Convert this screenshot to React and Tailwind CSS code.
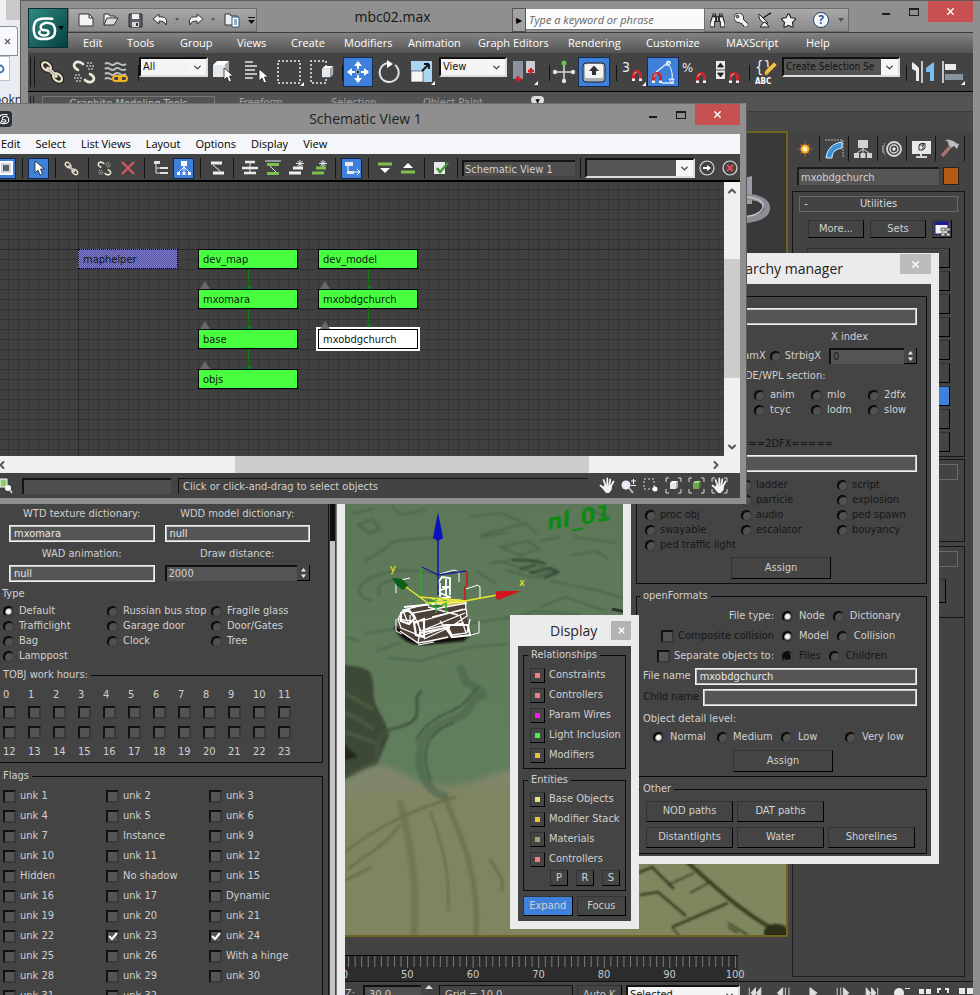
import { ChevronDown, ChevronLeft, ChevronRight, ChevronUp, X as XIcon } from "lucide-react";
import { FaBinoculars, FaKey, FaSatelliteDish, FaStar } from "react-icons/fa";

/* ---------- small shared controls ---------- */

const Radio = ({ name, label, checked, dim, gap = "gap-[6px]" }) => (
  <label className={`flex items-center whitespace-nowrap ${gap} ${dim ? "text-[#161616]" : ""}`}>
    <input
      type="radio"
      name={name}
      defaultChecked={checked}
      disabled={dim}
      className={`size-[11px] shrink-0 appearance-none rounded-full border border-[#3c3c3c] border-t-black border-l-black bg-[#505050] shadow-[inset_1px_1px_0_#0c0c0c] ${
        dim
          ? "checked:bg-[radial-gradient(circle,#0c0c0c_3px,#555_4px)]"
          : "checked:bg-[radial-gradient(circle,#f4f4f4_2px,#333_4px)]"
      }`}
    />
    <span>{label}</span>
  </label>
);

const Check = ({ label, checked, dim, hour }) => (
  <label className={`flex items-center gap-1 whitespace-nowrap ${dim ? "text-[#161616]" : ""}`}>
    <span className="relative flex">
      <input
        type="checkbox"
        defaultChecked={checked}
        disabled={dim}
        aria-label={hour}
        className="peer size-[13px] shrink-0 appearance-none border-2 border-[#3a3a3a] border-t-[#121212] border-l-[#121212] bg-[#545454]"
      />
      <svg viewBox="0 0 13 13" className="pointer-events-none absolute inset-0 hidden size-[13px] peer-checked:block">
        <path d="M3 6l3 3 5-6" fill="none" stroke="#fff" strokeWidth="2" />
      </svg>
    </span>
    {label && <span>{label}</span>}
  </label>
);

const Field = ({ value = "", label, className = "" }) => (
  <input
    type="text"
    aria-label={label}
    defaultValue={value}
    className={`h-[17px] min-w-0 border border-[#f0f0f0] bg-[#555] px-1 text-[11px] leading-[13px] text-[#e6e6e6] outline-1 -outline-offset-2 outline-[#c4c4c4] ${className}`}
  />
);

const Spinner = ({ value, label, dim }) => (
  <div className="flex h-4 w-full">
    <input
      type="text"
      aria-label={label}
      defaultValue={value}
      className={`min-w-0 flex-1 border-t-2 border-l-2 border-[#111] bg-[#555] px-[2px] leading-3 outline-none ${dim ? "text-[#161616]" : ""}`}
    />
    <button type="button" aria-label={`Step ${label}`} className="flex w-[13px] items-center justify-center border-r border-b border-black bg-[#454545]">
      <svg viewBox="0 0 7 12" className="h-3 w-[7px]" fill="#e8e8e8">
        <path d="M3.500 1L6 4.500H1zM3.500 11L6 7.500H1z" />
      </svg>
    </button>
  </div>
);

const PushButton = ({ children, className = "", tone = "bg-[#444]", label }) => (
  <button
    type="button"
    aria-label={label}
    className={`flex items-center justify-center border border-[#333] border-r-black border-b-black whitespace-nowrap ${tone} ${className}`}
  >
    {children}
  </button>
);

const Group = ({ title, className = "", legendClass = "", children }) => (
  <fieldset className={`min-w-0 border border-[#0c0c0c] ${className}`}>
    {title && <legend className={`px-[3px] leading-4 ${legendClass}`}>{title}</legend>}
    {children}
  </fieldset>
);

const DropDown = ({ label, text, className = "", textClass = "bg-[#f4f4f4] text-[11px] text-[#111]" }) => (
  <div className={`relative h-5 border-2 border-[#111] border-r-[#ddd] border-b-[#ddd] bg-white ${className}`}>
    <select aria-label={label} className={`block h-full w-full appearance-none overflow-hidden pr-[17px] pl-[2px] leading-4 whitespace-nowrap outline-none ${textClass}`}>
      <option>{text}</option>
    </select>
    <span className="pointer-events-none absolute inset-y-0 right-0 flex w-[17px] items-center justify-center bg-[#f6f6f6] text-[#444]">
      <ChevronDown size={11} strokeWidth={3} />
    </span>
  </div>
);

const Caption = ({ dark }) => (
  <div className={`flex h-[21px] items-stretch ${dark ? "text-[#1c1c1c]" : ""}`}>
    <button type="button" aria-label="Minimize" className="flex w-7 items-center justify-center">
      <span className="mt-1 h-[2px] w-2 bg-[#1c1c1c]" />
    </button>
    <button type="button" aria-label="Maximize" className="flex w-7 items-center justify-center">
      <span className="h-2 w-[10px] border border-t-2 border-[#1c1c1c]" />
    </button>
    <button type="button" aria-label="Close" className="flex w-[45px] items-center justify-center bg-[#c75050] text-white">
      <XIcon size={11} strokeWidth={3} />
    </button>
  </div>
);

/* ---------- icons ---------- */

const Ico = ({ w = 24, h = 24, children, label }) => (
  <svg width={w} height={h} viewBox={`0 0 ${w} ${h}`} fill="none" role="img" aria-label={label}>
    {children}
  </svg>
);

const MaxLogo = ({ size }) => (
  <svg width={size} height={size} viewBox="0 0 28 28" fill="none" stroke="#fff" strokeLinecap="round">
    <path d="M22 4C14 3 6 3 4 8c-1.500 4-1.500 9 0 13 1 3 4 4 9 4s9-1 11-4c1.500-4 1-8-1-11-2-2-7-2.500-10-1-3 1-4 4-2 6 2 1.500 6 0 7 2 1 3-2 5-6 4-3-.5-4-2-3-4" strokeWidth="2.600" />
  </svg>
);

const Link = ({ w = 24, bright }) => (
  <svg width={w} height={w} viewBox="0 0 24 24" fill="none" role="img" aria-label="Link">
    {!bright && (
      <g stroke="#221f1a" strokeWidth="4.500">
        <ellipse cx="6.500" cy="6.500" rx="5" ry="3.300" transform="rotate(40 6.500 6.500)" />
        <ellipse cx="17.500" cy="17.500" rx="5" ry="3.300" transform="rotate(40 17.500 17.500)" />
      </g>
    )}
    <g stroke="#e9dfca" strokeWidth="2.300">
      <ellipse cx="6.500" cy="6.500" rx="5" ry="3.300" transform="rotate(40 6.500 6.500)" />
      <ellipse cx="17.500" cy="17.500" rx="5" ry="3.300" transform="rotate(40 17.500 17.500)" />
      <path d="M8 8.500l8 7.500" strokeWidth="3.500" strokeLinecap="round" />
      <path d="M8.500 9l7 6.500" stroke="#8f8674" strokeWidth="1" />
    </g>
  </svg>
);

const Unlink = ({ w = 24 }) => (
  <svg width={w} height={w} viewBox="0 0 24 24" fill="none" role="img" aria-label="Unlink">
    <path d="M11 4C8 1 3 1 2 5c0 3 2 4 4 5M13 20c3 3 8 3 9-1 0-3-2-4-4-5" stroke="#ece6d6" strokeWidth="2.600" strokeLinecap="round" />
    <g stroke="#9a9a9a" strokeWidth="2" strokeDasharray="2 1">
      <path d="M15 3h5M14 6h8M16 9h5M3 15h5M2 18h8M4 21h5" />
    </g>
  </svg>
);

const Waves = () => (
  <Ico label="Bind to space warp">
    <path d="M1 4c4-4 6 4 10 0s6 4 11 0M1 9c4-4 6 4 10 0s6 4 11 0M1 14c4-4 6 4 10 0s6 4 11 0M1 19c3-3 5 1 7 0" stroke="#b9c0c0" strokeWidth="1.800" />
    <rect x="9" y="16" width="8" height="5" rx="2.500" stroke="#f0b323" strokeWidth="2" />
    <rect x="15" y="16" width="8" height="5" rx="2.500" stroke="#f0b323" strokeWidth="2" />
  </Ico>
);

const Pointer = ({ x = 0, y = 0 }) => (
  <path transform={`translate(${x} ${y})`} d="M0 0v12l3-3 2 5 2.500-1-2-5h4z" fill="#fff" stroke="#222" strokeWidth=".8" />
);

const Cube = ({ x = 0, y = 0, s = 1, front = "#e3e8ec", top = "#fff", side = "#a8b0b8" }) => (
  <g transform={`translate(${x} ${y}) scale(${s})`}>
    <path d="M0 4h12v12H0z" fill={front} />
    <path d="M0 4l4-4h12l-4 4z" fill={top} />
    <path d="M12 4l4-4v12l-4 4z" fill={side} />
  </g>
);

const Magnet = ({ x, y }) => (
  <g transform={`translate(${x} ${y})`}>
    <path d="M1.500 9V5a3.500 3.500 0 0 1 7 0v4" stroke="#c9262b" strokeWidth="3" />
    <path d="M1.500 11V8.500M8.500 11V8.500" stroke="#f2f2f2" strokeWidth="3" />
    <path d="M2 5a3 3 0 0 1 3-3" stroke="#f59a9a" strokeWidth="1" />
  </g>
);

const Corner = ({ x, y }) => <path d={`M${x} ${y}v-4l-4 4z`} fill="#fff" />;

/* Open hand with spread fingers */
const Hand = () => (
  <g stroke="#f2f2f2" strokeWidth="1.800" strokeLinecap="round">
    <path d="M6.500 8L4.500 3M8.300 7.500V1.500M10.300 8l1-5.500M12 9l2.500-4.500M5.500 12L1.500 8.500" />
    <path d="M5.500 8.500l7 .5-.5 4-2 2.500H7L4.500 12z" fill="#f2f2f2" strokeWidth="1" />
  </g>
);

/* Bar glyphs over the schematic toolbar */
const Bars = ({ color = "#eef1f4", plus, label }) => (
  <Ico w={18} h={16} label={label}>
    <path d={plus ? "M6 8h10M2 13h12" : "M3 3h11M5 13h11"} stroke={color} strokeWidth="3" />
    {!plus && <path d="M5 5l7 6" stroke="#eef1f4" />}
    {plus && <path d="M13 0v7M9 3.500h8M10.500 1l5 5M15.500 1l-5 5" stroke="#f5f5f5" strokeWidth=".9" />}
  </Ico>
);

/* ---------- background browser ---------- */

const BrowserBehind = () => (
  <div className="absolute inset-y-0 left-0 flex w-7 flex-col overflow-hidden bg-[#e9edf3] font-['Open_Sans',sans-serif] text-[12px] text-[#1c2a3a]">
    <div className="flex h-[26px]">
      <div className="w-[6px] bg-[#f1f1f1]" />
      <div className="h-5 flex-1 bg-[#c9c9c9]" />
    </div>
    <div className="flex h-[30px] w-[18px] items-center rounded-tr-sm border border-l-0 border-[#8a8f98] bg-[#f7f9fc] pl-[3px]">
      <XIcon size={9} strokeWidth={3} color="#555" />
    </div>
    <div className="flex h-[25px] w-[10px] items-center overflow-hidden border border-l-0 border-[#b5c3d6] bg-white">
      <svg width="6" height="10" viewBox="0 0 6 10" fill="none" stroke="#3578b8" strokeWidth="1.800">
        <circle cx="0" cy="5" r="3.500" />
      </svg>
    </div>
    <div className="-ml-[6px] h-8 leading-[38px] text-[#222]">ookn</div>
  </div>
);

/* ---------- main application window ---------- */

const QuickAccess = () => (
  <div className="mt-2 flex h-6 w-[189px] items-center gap-[9px] border border-[#6d6d6d] bg-linear-to-b from-[#a9a9a9] to-[#8a8a8a] pl-[9px]">
    <Ico w={16} h={16} label="New">
      <path d="M1 2h10l4 4v8H1z" fill="#f5f5f5" stroke="#333" />
      <path d="M11 2v4h4" stroke="#333" />
    </Ico>
    <Ico w={16} h={16} label="Open">
      <path d="M1 13V2h5l1 2h5v2" fill="#eee" stroke="#333" />
      <path d="M1 13L4 6h11l-4 7z" fill="#ddd" stroke="#333" />
    </Ico>
    <Ico w={15} h={15} label="Save">
      <path d="M1 1h13v13H1z" fill="#5d6166" stroke="#2b2b2b" />
      <path d="M4 1h7v5H4z" fill="#f1f1f1" />
      <path d="M4 9h7v5H4z" fill="#d5d5d5" />
      <path d="M8 10h2v3H8z" fill="#333" />
    </Ico>
    <Ico w={27} h={16} label="Undo">
      <path d="M1 7l6-5v3c6-1 9 2 7 8-1-3-3-4-7-4v3z" fill="#f4f4f4" stroke="#333" />
      <path d="M23 6h4l-2 3z" fill="#555" />
    </Ico>
    <Ico w={27} h={16} label="Redo">
      <path d="M15 7L9 2v3C3 4 0 7 2 13c1-3 3-4 7-4v3z" fill="#f4f4f4" stroke="#333" />
      <path d="M23 6h4l-2 3z" fill="#555" />
    </Ico>
    <Ico w={31} h={17} label="Project folder">
      <path d="M1 2h5l1 2h6v9H1z" fill="#eee" stroke="#333" />
      <path d="M8 5h7v10H8z" fill="#fff" stroke="#335f8c" />
      <path d="M10 8h3M10 10h3M10 12h3" stroke="#335f8c" />
      <path d="M24 5h7v1h-7zM24 8h7l-3.500 4z" fill="#111" />
    </Ico>
  </div>
);

const InfoCenter = () => (
  <div className="mt-2 flex h-6 w-[337px]">
    <button type="button" aria-label="Expand search" className="flex w-[14px] items-center justify-center border border-[#555] bg-[#a2a2a2] text-[8px] text-black">
      ▶
    </button>
    <input
      type="search"
      aria-label="Search"
      placeholder="Type a keyword or phrase"
      className="mt-px h-[21px] min-w-0 flex-1 border-b border-[#777] bg-[#fafafa] px-[3px] text-[11px] italic outline-none placeholder:text-[#666]"
    />
    <div className="flex w-[145px] items-center gap-[9px] border border-[#6d6d6d] bg-linear-to-b from-[#a9a9a9] to-[#8a8a8a] pl-[5px] text-[#f2f2f2]">
      <FaBinoculars size={15} stroke="#222" strokeWidth={36} />
      <FaKey size={14} stroke="#222" strokeWidth={36} className="-scale-x-100" />
      <Ico w={15} h={16} label="Communication center">
        <path d="M2 2c-1 6 4 10 9 9z" fill="#f2f2f2" stroke="#222" />
        <path d="M6 6l6-4M12 2l2-1" stroke="#222" strokeWidth="1.500" />
        <path d="M7 10l-4 5h9l-3-4z" fill="#f2f2f2" stroke="#222" />
      </Ico>
      <FaStar size={15} stroke="#222" strokeWidth={44} />
      <span className="ml-2 flex size-4 items-center justify-center rounded-full border border-[#24425f] bg-[#f4f7fa] text-[12px] font-bold text-[#1d5b95]">?</span>
      <span className="border-x-3 border-t-4 border-x-transparent border-t-[#555]" />
    </div>
  </div>
);

const MENUS = ["Edit", "Tools", "Group", "Views", "Create", "Modifiers", "Animation", "Graph Editors", "Rendering", "Customize", "MAXScript", "Help"];

const Sep = () => <span className="mt-2 h-4 w-[7px] shrink-0 border-r border-[#111]" />;

const Slot = ({ w, on, children }) => (
  <button type="button" className={`flex h-[30px] shrink-0 items-center justify-center ${w} ${on ? "border border-[#142c50] bg-[#3f81da]" : ""}`}>
    {children}
  </button>
);

const MainToolbar = () => (
  <div className="flex h-[39px] items-start border-b border-black bg-[#434343] pt-1">
    <span className="mr-px ml-[2px] h-[30px] w-[5px] shrink-0 border-x border-[#151515]" />
    <Slot w="w-8"><Link /></Slot>
    <Slot w="w-8"><Unlink /></Slot>
    <Slot w="w-8"><Waves /></Slot>
    <Sep />
    <DropDown label="Selection filter" text="All" className="w-[69px] shrink-0" />
    <Slot w="w-8">
      <Ico label="Select object"><Cube x={1} y={1} /><Pointer x={12} y={8} /></Ico>
    </Slot>
    <Slot w="w-8">
      <Ico label="Select by name">
        <path d="M1 2h8M1 6h12M1 10h10M1 14h12M1 18h8" stroke="#e8e8e8" strokeWidth="1.500" />
        <Pointer x={15} y={9} />
      </Ico>
    </Slot>
    <Slot w="w-9">
      <Ico w={28} h={28} label="Rectangular region">
        <rect x="2" y="3" width="22" height="22" stroke="#f0f0f0" strokeWidth="1.500" strokeDasharray="2 2" />
        <Corner x={28} y={28} />
      </Ico>
    </Slot>
    <Slot w="w-7">
      <Ico w={24} h={24} label="Window crossing">
        <path d="M16 7V1H1v22h15v-5" stroke="#f0f0f0" strokeWidth="1.500" strokeDasharray="2 2" />
        <Cube x={12} y={6} s={0.7} />
      </Ico>
    </Slot>
    <Sep />
    <Slot w="w-[30px]" on>
      <Ico label="Move">
        <path d="M12 1l4 5h-3v3h-2V6H8zM12 23l4-5h-3v-3h-2v3H8zM1 12l5-4v3h3v2H6v3zM23 12l-5-4v3h-3v2h3v3z" fill="#fff" />
        <path d="M10.500 10.500h3v3h-3z" fill="#1a1a1a" stroke="#fff" strokeWidth=".5" />
      </Ico>
    </Slot>
    <Slot w="w-8">
      <Ico label="Rotate">
        <path d="M12 3a9.500 9.500 0 1 0 6 2" stroke="#dfe3e6" strokeWidth="2" />
        <path d="M10 0l6 4-6 4z" fill="#fff" />
      </Ico>
    </Slot>
    <Slot w="w-[34px]">
      <Ico w={26} h={26} label="Scale">
        <path d="M2 2h21v21H2z" fill="#a9d5f0" />
        <path d="M2 12h12v11H2z" fill="#f5f5f5" stroke="#333" strokeWidth=".6" />
        <path d="M13 12l7-7M20 5h-5M20 5v5" stroke="#111" strokeWidth="1.800" />
        <Corner x={26} y={26} />
      </Ico>
    </Slot>
    <DropDown label="Reference coordinate system" text="View" className="w-[68px] shrink-0" />
    <Slot w="w-9">
      <Ico w={26} h={26} label="Use pivot point">
        <path d="M1 2h10v18H1z" fill="#8b949c" />
        <path d="M14 2h9v12h-9z" fill="#c9ced2" />
        <path d="M3 20h6M6 17v6M16 12h6M19 9v6" stroke="#d51f26" strokeWidth="2.400" />
        <Corner x={26} y={26} />
      </Ico>
    </Slot>
    <Sep />
    <Slot w="w-7">
      <Ico w={24} h={24} label="Manipulate">
        <path d="M12 3v18M3 12h18" stroke="#d8d8d8" strokeWidth="1.500" />
        <circle cx="12" cy="3" r="2.500" fill="#69c253" />
        <circle cx="12" cy="21" r="2.200" fill="#e2e2e2" />
        <circle cx="3" cy="12" r="2.200" fill="#e2e2e2" />
        <circle cx="21" cy="12" r="2.200" fill="#e2e2e2" />
      </Ico>
    </Slot>
    <Slot w="w-8" on>
      <Ico label="Keyboard shortcut override">
        <rect x="1" y="3" width="22" height="19" rx="3" fill="#aab2b9" stroke="#222" />
        <rect x="3" y="4" width="18" height="14" rx="2" fill="#f3f3f3" />
        <path d="M12 5.500l5 5.500h-3v4h-4v-4H7z" fill="#333" />
      </Ico>
    </Slot>
    <Sep />
    <Slot w="w-[30px]">
      <Ico w={28} h={28} label="Snaps toggle">
        <text x="4" y="14" fontSize="14" fill="#eee">3</text>
        <Magnet x={14} y={12} />
        <Corner x={28} y={28} />
      </Ico>
    </Slot>
    <Slot w="w-8" on>
      <Ico w={26} h={26} label="Angle snap">
        <path d="M5 14L20 2M12 24h12" stroke="#dfeaf8" strokeWidth="1.500" />
        <path d="M17 4c4 4 6 10 5 17M22 24l-3-4h5zM17 2v5l4-3z" stroke="#fff" />
        <Magnet x={2} y={13} />
      </Ico>
    </Slot>
    <Slot w="w-8">
      <Ico w={26} h={26} label="Percent snap">
        <text x="0" y="13" fontSize="13" fill="#eee">%</text>
        <Magnet x={14} y={13} />
      </Ico>
    </Slot>
    <Slot w="w-8">
      <Ico w={26} h={26} label="Spinner snap">
        <path d="M2 2h9v18H2z" fill="#e9eaeb" />
        <path d="M6.500 4l3 4h-6zM6.500 18l3-4h-6zM2 11h9" fill="#222" stroke="#222" strokeWidth=".8" />
        <Magnet x={15} y={13} />
      </Ico>
    </Slot>
    <Sep />
    <Slot w="w-8">
      <Ico w={26} h={26} label="Edit named selection sets">
        <text x="2" y="13" fontSize="15" fill="#eee">{"{}"}</text>
        <path d="M12 12l9-9 3 3-9 9-4 1z" fill="#f0c14b" stroke="#6b4c13" strokeWidth=".7" />
        <text x="2" y="25" fontSize="8" fontWeight="bold" fill="#fff">ABC</text>
      </Ico>
    </Slot>
    <DropDown label="Named selection sets" text="Create Selection Se" className="w-[118px] shrink-0" textClass="bg-[#555] text-[10px] text-[#111]" />
    <Sep />
    <Slot w="w-8">
      <Ico w={26} h={26} label="Mirror">
        <path d="M2 3l3 2 4 4v13H6V12l-4-2z" fill="#e9ecef" />
        <path d="M12 2v22" stroke="#eee" strokeWidth="1.500" />
        <path d="M24 3l-3 2-5 4v4h4v9h4z" fill="#79bdf0" />
      </Ico>
    </Slot>
    <Slot w="w-7">
      <Ico w={24} h={26} label="Align">
        <path d="M2 2v22" stroke="#eee" strokeWidth="1.500" />
        <path d="M4 5h11v6H4z" fill="#e9ecef" />
        <path d="M4 15h18v6H4z" fill="#8895a0" />
        <Corner x={24} y={26} />
      </Ico>
    </Slot>
  </div>
);

const Ribbon = () => (
  <div className="bg-[#484848]">
    <div className="flex h-5 items-start border-b border-[#3a3a3a] bg-[#535353] pt-1 text-[11px] text-[#a0a0a0]">
      <span className="mr-2 ml-[2px] h-3 w-[4px] border-x border-[#222]" />
      <a href="#graphite" className="w-[173px] border border-b-0 border-[#777] text-center leading-[14px] text-[#b8b8b8]">Graphite Modeling Tools</a>
      <a href="#freeform" className="ml-6 w-[92px] leading-[14px]">Freeform</a>
      <a href="#selection" className="w-[92px] leading-[14px]">Selection</a>
      <a href="#paint" className="w-[108px] leading-[14px]">Object Paint</a>
      <span className="flex h-2 w-[13px] items-center justify-center rounded-sm bg-[#ddd] text-[6px] text-black">▼</span>
    </div>
    <div className="h-[19px]" />
  </div>
);

const Scene = () => (
  <svg className="absolute inset-0 h-full w-full" role="img" aria-label="Perspective viewport">
    <defs>
      <linearGradient id="grass" x1="0" y1="0" x2="0" y2="1">
        <stop offset="0" stopColor="#5c7658" />
        <stop offset="1" stopColor="#64835f" />
      </linearGradient>
      <filter id="soft"><feGaussianBlur stdDeviation="1.200" /></filter>
      <filter id="softer"><feGaussianBlur stdDeviation="3" /></filter>
    </defs>
    {/* origin shifted so that the numbers below are desktop coordinates */}
    <g transform="translate(-28 -132)">
      <path d="M28 132h762v330H28z" fill="#393939" />
      {/* view cube */}
      <path d="M740 178l12-3v28h-12z" fill="#9a9ea6" />
      <path d="M744 196c14-1 24 5 23 12s-12 11-25 11" fill="none" stroke="#8b8e95" strokeWidth="6" />
      <path d="M744 196c12-1 20 5 19 10s-8 9-21 10" fill="none" stroke="#c0c2c7" strokeWidth="1.500" />
      <path d="M340 460h450v480H340z" fill="url(#grass)" />
      {/* dark scrub and sand */}
      <path d="M340 664c12 0 24 2 30 7 5 8 2 20 5 30 4 12 12 20 14 34l-12 28-40 20z" fill="#3d4a35" filter="url(#soft)" />
      <path d="M340 690c12 4 22 14 34 18M340 710c14 4 24 12 34 18M340 730c12 2 24 8 36 12" stroke="#4b5840" strokeWidth="4" fill="none" filter="url(#soft)" />
      <path d="M340 740l18 16-18 4z" fill="#20261a" filter="url(#soft)" />
      <path d="M336 784c14-6 28-18 44-20 20 4 30 16 52 20 30 6 50-8 72-14 34-4 56-20 140-26v206H336z" fill="#80866a" filter="url(#softer)" />
      <path d="M336 800c60-14 110-8 300-20v160H336z" fill="#7f855f" filter="url(#softer)" />
      <path d="M626 850h170v90H626z" fill="#80875f" />
      {/* streets drawn on the grass map */}
      <g fill="none" stroke="#3d5440" strokeWidth="1.600" opacity=".65" filter="url(#soft)" strokeLinecap="round">
        <path d="M358 524l14-6 8 10-10 4zM352 512l22-4M392 506l10 8 24-6M366 560l30-20 40-4M470 516l30-4 20 8M480 536l26-4M500 546l28-6 12 8-20 6zM482 534l44-12 10 10M540 540l20-4M572 554l24-4 12 8M575 536l40 6M590 508l20 10" />
        <path d="M372 600c-14-4-18-12-4-22 20-10 40-10 66-6M380 594c-6-8 4-14 18-16M490 562l34-5 16 8 16 8-22 4-28-8M500 560l40 14 14-4M476 570l20 12" />
        <path d="M388 657l32 3 50-14 36-3M360 640l-14-4M456 624l60-8 20-6 44 4M540 606l26-10 40 14M600 590l26 8M550 580l50 10" />
        <path d="M366 632l30-4M376 650l24-8" />
      </g>
      <path d="M512 559l24 1 10 3M520 568l16-4M530 572l20-5 8 4-14 6" stroke="#2f4432" strokeWidth="2" fill="none" filter="url(#soft)" />
      <path d="M612 608l18 4" stroke="#27382a" strokeWidth="3" fill="none" />
      {/* dry streams */}
      <g fill="none" filter="url(#soft)">
        <path d="M459 664c4 6 3 12 8 18 8 4 16 6 16 12-16 4-8 18-30 24-14 6-26 12-31 24-5 16-2 30 6 42 6 8 12 10 20 12" stroke="#48634d" strokeWidth="8" opacity=".55" />
        <path d="M478 686c-8 8-10 16-26 24-16 6-30 16-36 30" stroke="#384f3c" strokeWidth="1.500" />
        <path d="M422 690c-10 6-2 18-6 26-6 10-20 10-30 14" stroke="#3b523e" strokeWidth="2.500" />
        <path d="M386 730c-14 10-4 24-14 34" stroke="#42573f" strokeWidth="6" opacity=".6" />
        <path d="M454 722c-14 4-24 14-27 24s0 24 4 34" stroke="#3a523e" strokeWidth="1.500" />
      </g>
      {/* vehicle tracks in the sand */}
      <g fill="none" stroke="#5f6446" filter="url(#soft)" opacity=".7">
        <path d="M400 800c10 40 18 80 14 136" strokeWidth="7" opacity=".6" />
        <path d="M446 800c18 40 34 80 30 136" strokeWidth="5" opacity=".7" />
        <path d="M430 810c14 40 20 60 18 100" strokeWidth="2" />
        <path d="M346 850c30-22 60-40 110-54M348 868c20-16 36-22 52-44M344 880l28-14M490 858l12 20v12" strokeWidth="2.500" />
      </g>
      {/* town blocks at the lower right */}
      <g fill="none" stroke="#3a3d22" filter="url(#soft)">
        <path d="M686 860c30 26 50 48 100 76" strokeWidth="4" />
        <path d="M638 872l14-6 22 22M640 894l18-3 28 24M672 926l56-24" strokeWidth="2.500" />
        <path d="M690 892l22-12M668 884l26-12M728 922l20 12M728 926l10 6M672 926l8 10" strokeWidth="1.500" />
      </g>
      <path d="M764 930c2-8 18-10 24-2v10h-24z" fill="#2c2f18" filter="url(#soft)" />
      <text x="548" y="529" fontSize="22" fontStyle="italic" fontWeight="bold" fontFamily="DejaVu Sans" fill="#0d8a12" transform="rotate(-9 548 529)">nl_01</text>
      {/* vehicle */}
      <path d="M394 626c6 12 14 18 30 18l40-4 8-8-20-12z" fill="#0a0f0a" filter="url(#soft)" />
      <path d="M398 618l5-9 14-4 20-4 28 1 3 20 3 7-20 8-31 6-15-10-7-6z" fill="#4d4039" />
      <g fill="none" stroke="#fff" strokeWidth="1.300">
        <path d="M398 618l5-9 24-6 38-3 2 15-12 8-34 12-20-8zM400 630l18 12 12-2 18-4M403 609l10 3 54-10M413 612l8 18M421 620l42-12M421 630l44-18M398 618l20 3 3 14M448 626l4 8 15-2 3-14M452 624l12-2M440 620l12 16M418 642l2-12 26-6M404 612l4 10M410 614v8M428 606l30 8M432 616l34-8M424 638l22-10M460 614l6 18" />
        <path d="M401 612l8-3 6 8-6 6-8-3zM414 622l10-4v18l-8-2zM446 624l6 12 18-2-2-10zM404 606l62-6M420 632l30-6" strokeWidth="2.200" />
        <path d="M438 582l4-6 8 1v17M440 596v-14M446 578v16M442 586h8M438 590l12-4M437 598l14-2M440 592l10 4" strokeWidth="1.800" />
        <path d="M440 573l14-4 5 2v10M466 588l12-4 2 2v11M396 592v-12l14-3M396 618v12l6 3M418 644l16-3M479 620v12l-13 3M396 580l6 4" strokeWidth="1" />
      </g>
      <path d="M430 597l30 1 5 4-22 4z" fill="#f4ee7a" opacity=".75" />
      {/* transform gizmo */}
      <path d="M438 574v-36" stroke="#0b17b5" strokeWidth="1.500" />
      <path d="M438 511l-5 26 5 3 5-3z" fill="#0b10c0" />
      <path d="M422 566l16 8 28-4M438 574v20" stroke="#10209c" strokeWidth="1.300" fill="none" />
      <path d="M467 570v14l-2 2v14" stroke="#d01515" strokeWidth="1.500" fill="none" />
      <path d="M421 567v30M428 602l12-5 8 4-12 6zM436 600v12M446 600v12" stroke="#1faf2a" strokeWidth="1.300" fill="none" />
      <path d="M406 586l22 16 37-2 32-6M420 596l46 4" stroke="#e9e92a" strokeWidth="1.300" fill="none" />
      <path d="M392 577l10 1 6 6-5 5-6-4z" fill="#0b5f16" />
      <path d="M521 590l-24 0c-2 3-2 6 1 9z" fill="#d4141a" />
      <text x="390" y="571" fontSize="11" fill="#f2f20a">y</text>
      <text x="519" y="585" fontSize="11" fill="#f2f20a">x</text>
    </g>
  </svg>
);

const PanelTab = ({ children }) => (
  <button type="button" className="flex h-[25px] w-[29px] shrink-0 items-center justify-center border-r border-r-[#151515]">{children}</button>
);

const PanelTabs = () => (
  <div className="flex h-[27px] items-center pl-[3px]">
    <PanelTab>
      <Ico w={20} h={20} label="Create">
        <path d="M10 2v16M2 10h16M5 5l10 10M15 5L5 15" stroke="#b5611f" strokeWidth="1" />
        <circle cx="10" cy="10" r="4.500" fill="#f7a325" />
        <circle cx="10" cy="10" r="2.500" fill="#fff6b8" />
      </Ico>
    </PanelTab>
    <PanelTab>
      <Ico w={20} h={20} label="Modify">
        <path d="M1 1h18v18" stroke="#bbb" strokeDasharray="2 1" />
        <path d="M2 19C3 10 9 4 18 3v6C12 10 8 13 8 19z" fill="#3d93d6" stroke="#d9efff" />
      </Ico>
    </PanelTab>
    <PanelTab>
      <Ico w={20} h={20} label="Hierarchy">
        <path d="M5 1h10v8H5zM1 14h5v5H1zM7.500 14h5v5h-5zM14 14h5v5h-5z" fill="#cfd3d6" />
        <path d="M10 9v5M10 10l-6 4M10 10l6 4" stroke="#cfd3d6" />
      </Ico>
    </PanelTab>
    <PanelTab>
      <Ico w={20} h={20} label="Motion">
        <circle cx="12" cy="10" r="7" stroke="#d6d9dc" strokeWidth="1.800" />
        <circle cx="12" cy="10" r="4" stroke="#d6d9dc" strokeWidth="1.500" />
        <circle cx="12" cy="10" r="1.700" fill="#eee" />
        <path d="M3 4c-2 4-2 8 0 12M1 6c-1 3-1 5 0 8" stroke="#999" />
      </Ico>
    </PanelTab>
    <PanelTab>
      <Ico w={21} h={20} label="Display">
        <path d="M1 2h19v13H1z" fill="#e6e8ea" />
        <path d="M8 6l2-1.500h4V9l-2 2H8zM8 6h4v5M12 6l2-1.500" stroke="#333" />
        <path d="M5 18h11M10 15v3" stroke="#cfd3d6" strokeWidth="2" />
      </Ico>
    </PanelTab>
    <PanelTab>
      <Ico w={20} h={20} label="Utilities">
        <path d="M10 8L2 17" stroke="#a4746c" strokeWidth="3.500" />
        <path d="M5 1c5-1 9 1 11 3l3 1-2 5-3-3-3 2-3-4c1-1 0-3-3-4z" fill="#b7bcc1" />
      </Ico>
    </PanelTab>
  </div>
);

const Rollout = ({ title, children, className = "" }) => (
  <section className={`mx-1 border border-[#151515] px-[6px] pb-1 ${className}`}>
    <h2 className="mt-1 flex h-4 items-center border border-[#6a6a6a] text-[#dcdcdc]">
      <span className="w-3 text-center">{title ? "-" : ""}</span>
      <span className="flex-1 pr-3 text-center">{title}</span>
    </h2>
    {children}
  </section>
);

const CommandPanel = () => (
  <aside className="flex w-[181px] shrink-0 flex-col pt-1">
    <PanelTabs />
    <div className="mr-[10px] ml-[9px] mt-[5px] flex items-center gap-1">
      <input
        aria-label="Object name"
        defaultValue="mxobdgchurch"
        className="h-[18px] min-w-0 flex-1 border-t-2 border-l-2 border-[#1b1b1b] bg-[#555] px-[2px] outline-none"
      />
      <button type="button" aria-label="Object color" className="h-[18px] w-4 border border-[#222] bg-[#b35b15]" />
    </div>
    <Rollout title="Utilities" className="mt-[6px]">
      <div className="mt-2 flex gap-[6px] pl-[9px]">
        <PushButton className="h-[18px] w-14">More...</PushButton>
        <PushButton className="h-[18px] w-14">Sets</PushButton>
        <PushButton className="h-[18px] w-5" label="Configure button sets">
          <Ico w={17} h={16}>
            <path d="M1 1h13v12H1z" fill="#f2f2f2" stroke="#1a1a9a" />
            <path d="M1 1h13v3H1z" fill="#1a1a9a" />
            <path d="M7 7h4v3H7zM12 7h4v3h-4zM7 12h4v3H7zM12 12h4v3h-4z" fill="#ccc" stroke="#333" strokeWidth=".6" />
          </Ico>
        </PushButton>
      </div>
      <div className="mt-[10px] flex flex-col gap-[3px] px-2">
        {["Asset Browser", "Camera Match", "Collapse", "Color Clipboard", "Measure", "Motion Capture", "MAXScript", "Reset XForm", "Flight Studio"].map((name) => (
          <PushButton key={name} label={name} className="h-5" tone={name === "MAXScript" ? "bg-[#3f81da]" : "bg-[#444]"} />
        ))}
      </div>
    </Rollout>
    <Rollout className="mt-[2px] h-[83px]" />
    <Rollout className="mt-1 flex h-[72px] flex-col">
      <PushButton label="Close utility" className="mx-3 mt-3 h-6" />
    </Rollout>
    <div className="mx-1 mb-1 flex-1 border border-t-0 border-[#1d1d1d]" />
  </aside>
);

const Timeline = () => (
  <div className="h-11 bg-[#434343] pt-[18px]">
    <div className="mr-[50px] h-[26px] border-t border-black bg-[#2c2c2c] pl-[281px]">
      <div className="relative w-[459px]">
        <svg viewBox="0 0 459 12" className="block h-3 w-full" stroke="#7b7b7b">
          {Array.from({ length: 61 }, (_, i) => (
            <path key={i} d={`M${33 + i * 6.557} 0v${i % 10 === 0 ? 12 : 11}`} />
          ))}
        </svg>
        <div className="grid grid-cols-7 text-center leading-[14px] text-[#c8c8c8]">
          {[40, 50, 60, 70, 80, 90, 100].map((n) => (
            <span key={n}>{n}</span>
          ))}
        </div>
      </div>
    </div>
  </div>
);

const StatusBar = () => (
  <div className="flex h-[14px] items-start overflow-hidden border-t border-[#111] bg-[#434343] pt-[3px] text-[#c8c8c8]">
    <label htmlFor="axis-z" className="w-[335px] shrink-0 pr-2 text-right leading-[18px]">Z:</label>
    <input id="axis-z" defaultValue="30.0" className="h-[18px] w-[58px] border-t-2 border-l-2 border-[#111] bg-[#505050] px-1 leading-[18px]" />
    <span className="mr-[6px] ml-1 border-x-4 border-b-4 border-x-transparent border-b-[#ddd]" />
    <span className="h-5 w-[97px] border-t border-l border-[#111] pl-[5px] leading-[18px]">Grid = 10.0</span>
    <span className="h-5 w-[44px] border-t border-r border-[#111]" />
    <PushButton className="mx-1 h-5 w-12">Auto K</PushButton>
    <DropDown label="Key filter" text="Selected" className="w-[114px] shrink-0" />
    <div className="ml-2 flex h-4 items-center gap-[14px] text-white">
      {["M1 3v12M14 3l-5 6 5 6zM8 3L3 9l5 6z", "M6 3L0 9l6 6zM9 3v12M13 3v12", "M4 3l8 6-8 6z", "M2 3v12M6 3v12M9 3l6 6-6 6z", "M2 3l5 6-5 6zM8 3l5 6-5 6zM15 3v12"].map((d) => (
        <svg key={d} width="15" height="16" viewBox="0 0 16 18" fill="#ddd" stroke="#ddd"><path d={d} /></svg>
      ))}
      <svg width="80" height="16" viewBox="0 0 80 16" fill="#e8e8e8">
        <circle cx="6" cy="8" r="5" />
        <path d="M12 3h5v1h-5zM26 4h5v5h-5zM33 4h5v5h-5zM44 3h4v2h-2v3h-2zM56 3v5h-2V5h-2V3zM66 3h6v6h-6zM74 3h6v6h-6z" />
      </svg>
    </div>
  </div>
);

const MainWindow = () => (
  <div className="absolute inset-y-0 right-0 left-5 flex flex-col border-t border-l border-[#5c5c5c] bg-[#8f8f8f] pr-[7px] pl-[7px]">
    <header className="relative flex h-[31px] shrink-0 font-['Open_Sans',sans-serif]">
      <button type="button" aria-label="Application menu" className="absolute top-[7px] left-0 z-10 flex h-10 w-10 items-center border border-[#0c2f2e] bg-linear-to-br from-[#2f8a83] to-[#06413f] pl-[2px]">
        <MaxLogo size={27} />
        <span className="border-x-3 border-t-4 border-x-transparent border-t-black" />
      </button>
      <div className="-mt-px ml-10"><QuickAccess /></div>
      <h1 className="flex-1 pl-4 text-center text-[14px] leading-[31px] text-[#151515]">mbc02.max</h1>
      <div className="-mt-px"><InfoCenter /></div>
      <div className="ml-[23px]"><Caption /></div>
    </header>
    <nav className="grid h-[21px] shrink-0 grid-cols-[44px_53px_57px_54px_53px_64px_70px_90px_78px_80px_80px_auto] border-t border-[#3c3c3c] bg-linear-to-b from-[#838383] to-[#555] pl-[55px] font-['Open_Sans',sans-serif] text-[11px] text-white">
      {MENUS.map((m) => (
        <button key={m} type="button" className="text-left leading-5 whitespace-nowrap">{m}</button>
      ))}
    </nav>
    <MainToolbar />
    <Ribbon />
    <div className="flex min-h-0 flex-1 bg-[#434343]">
      <div className="flex min-w-0 flex-1 flex-col">
        <div className="relative min-h-0 flex-1 overflow-hidden border-2 border-l-0 border-[#6e651f]">
          <Scene />
        </div>
        <Timeline />
      </div>
      <CommandPanel />
      <div className="w-1 bg-[#434343]" />
    </div>
    <StatusBar />
  </div>
);

/* ---------- map object dialog (lower left) ---------- */

const TYPES = [
  ["Default", "Russian bus stop", "Fragile glass"],
  ["Trafficlight", "Garage door", "Door/Gates"],
  ["Bag", "Clock", "Tree"],
  ["Lamppost"],
];

const FLAGS = [
  "unk 1", "unk 2", "unk 3", "unk 4", "unk 5", "unk 6", "unk 7", "Instance", "unk 9", "unk 10", "unk 11",
  "unk 12", "Hidden", "No shadow", "unk 15", "unk 16", "unk 17", "Dynamic", "unk 19", "unk 20", "unk 21",
  "unk 22", "unk 23", "unk 24", "unk 25", "unk 26", "With a hinge", "unk 28", "unk 29", "unk 30", "unk 31", "unk 32",
];

const HOURS = Array.from({ length: 24 }, (_, i) => i);

const HourNumbers = ({ from, h }) => (
  <div className={`grid grid-cols-[repeat(12,25px)] items-center pl-[3px] ${h}`}>
    {HOURS.slice(from, from + 12).map((n) => <span key={n}>{n}</span>)}
  </div>
);

const HourChecks = ({ from }) => (
  <div className="grid h-5 grid-cols-[repeat(12,25px)] items-center pl-[3px]">
    {HOURS.slice(from, from + 12).map((n) => <Check key={n} hour={`Hour ${n}`} />)}
  </div>
);

const MapDialog = () => (
  <section className="absolute top-[503px] bottom-0 left-0 flex w-[345px] overflow-hidden bg-[#ebebeb]">
    <div className="w-[329px] border-r border-[#151515] bg-[#444] pr-[5px]">
      <div className="grid grid-cols-2 gap-x-[10px] pr-[13px] pl-[9px]">
        <span className="h-[22px] text-center leading-[22px]">WTD texture dictionary:</span>
        <span className="h-[22px] text-center leading-[22px]">WDD model dictionary:</span>
        <Field label="WTD texture dictionary" value="mxomara" />
        <Field label="WDD model dictionary" value="null" />
        <span className="h-[23px] text-center leading-[23px]">WAD animation:</span>
        <span className="h-[23px] text-center leading-[23px]">Draw distance:</span>
        <Field label="WAD animation" value="null" />
        <Spinner label="Draw distance" value="2000" />
      </div>
      <p className="h-[21px] pl-[2px] leading-6">Type</p>
      <div className="flex flex-col">
        {TYPES.map((row) => (
          <div key={row[0]} className="grid h-[15px] grid-cols-[104px_104px_auto] items-center pl-[3px]">
            {row.map((t) => <Radio key={t} name="type" label={t} checked={t === "Default"} gap="gap-[5px]" />)}
          </div>
        ))}
      </div>
      <Group title="TOBJ work hours:" className="mt-1 border-l-0">
        <HourNumbers from={0} h="h-[19px] pt-1" />
        <HourChecks from={0} />
        <HourChecks from={12} />
        <HourNumbers from={12} h="h-5" />
      </Group>
      <Group title="Flags" className="mt-[5px] border-l-0 pt-[2px]">
        <div className="grid grid-cols-[103px_103px_auto] pl-[3px]">
          {FLAGS.map((f) => (
            <div key={f} className="flex h-5 items-center">
              <Check label={f} checked={f === "unk 23" || f === "unk 24"} />
            </div>
          ))}
        </div>
      </Group>
    </div>
    <div className="flex w-2 flex-col border-r border-[#777] bg-[#444]">
      <div className="mx-px h-[38px] bg-[#0d0d0d]" />
      <div className="mx-px flex-1 bg-[#c4c4c4]" />
    </div>
  </section>
);

/* ---------- hierarchy manager ---------- */

const SECTIONS = ["anim", "mlo", "2dfx", "tcyc", "lodm", "slow"];

const EFFECTS = [
  ["proc obj", "swayable", "ped traffic light"],
  ["ladder", "particle", "audio", "escalator", ""],
  ["script", "explosion", "ped spawn", "bouyancy", ""],
];

const HierarchyManager = () => (
  <section className="absolute top-[253px] left-[623px] w-[316px] border-8 border-t-0 border-[#ebebeb] bg-[#444]">
    <header className="flex h-[31px] items-start justify-end bg-[#ebebeb] font-['Open_Sans',sans-serif]">
      <h2 className="mr-[57px] text-[14px] leading-8 text-[#222]">hierarchy manager</h2>
      <button type="button" aria-label="Close" className="mt-px flex h-5 w-[31px] items-center justify-center bg-[#bcbcbc] text-white">
        <XIcon size={11} strokeWidth={3} />
      </button>
    </header>
    <div className="pr-1 pb-[2px] pl-[5px]">
      <Group className="mt-3 pt-[11px] pr-[9px] pb-1 pl-2">
        <Field label="Object list" className="block w-full" />
        <div className="flex h-[23px] items-center justify-end pt-px">
          <span className="mr-[49px]">X index</span>
        </div>
        <div className="flex h-4 items-center justify-end gap-1">
          <Radio name="stream" label="StreamX" gap="gap-1" />
          <Radio name="stream" label="StrbigX" gap="gap-1" />
          <div className="ml-1 w-[88px]"><Spinner label="X index" value="0" dim /></div>
        </div>
        <p className="h-6 pl-[97px] leading-6">IDE/WPL section:</p>
        <div className="grid grid-cols-[57px_57px_auto] pl-[109px]">
          {SECTIONS.map((s) => (
            <div key={s} className="flex h-[15px] items-center"><Radio name="section" label={s} gap="gap-[5px]" /></div>
          ))}
        </div>
        <p className="mt-[15px] h-[22px] pr-[84px] text-right leading-[22px] text-[#161616]">=====2DFX=====</p>
        <Field label="2DFX" className="block w-full" />
        <div className="grid grid-cols-[96px_96px_auto] pt-[6px]">
          {EFFECTS.map((col, i) => (
            <div key={i} className="flex flex-col justify-end">
              {col.map((e) => (
                <div key={e} className="flex h-[15px] items-center">
                  {e && <Radio name="effect" label={e} dim gap="gap-1" />}
                </div>
              ))}
            </div>
          ))}
        </div>
        <PushButton className="mx-auto mt-1 h-[22px] w-[100px]">Assign</PushButton>
      </Group>
      <Group title="openFormats" className="mt-1 pt-[2px] pr-[9px] pb-1" legendClass="ml-[3px]">
        <div className="grid grid-cols-[137px_auto] gap-x-2 whitespace-nowrap">
          <span className="flex h-5 items-center justify-end">File type:</span>
          <span className="flex items-center gap-2">
            <Radio name="file-type" label="Node" checked />
            <Radio name="file-type" label="Dictionary" />
          </span>
          <span className="flex h-5 items-center justify-end"><Check label="Composite collision" dim /></span>
          <span className="flex items-center gap-2">
            <Radio name="model" label="Model" checked />
            <Radio name="model" label="Collision" />
          </span>
          <span className="flex h-5 items-center justify-end"><Check label="Separate objects to:" /></span>
          <span className="flex items-center gap-2">
            <Radio name="split" label="Files" checked dim />
            <Radio name="split" label="Children" dim />
          </span>
        </div>
        <div className="flex h-[21px] items-center gap-1 pl-[6px]">
          <span>File name</span>
          <Field label="File name" value="mxobdgchurch" className="flex-1" />
        </div>
        <div className="flex h-[21px] items-center gap-1 pl-[6px]">
          <span className="text-[#161616]">Child name</span>
          <Field label="Child name" className="flex-1" />
        </div>
        <p className="h-[21px] pl-[6px] leading-[21px]">Object detail level:</p>
        <div className="grid h-[17px] grid-cols-[64px_64px_64px_auto] items-center pl-4">
          <Radio name="detail" label="Normal" checked />
          <Radio name="detail" label="Medium" gap="gap-[5px]" />
          <Radio name="detail" label="Low" />
          <Radio name="detail" label="Very low" />
        </div>
        <PushButton className="mt-1 ml-24 h-[22px] w-[100px]">Assign</PushButton>
      </Group>
      <Group title="Other" className="mt-1 pt-1 pb-[5px]" legendClass="ml-[3px]">
        <div className="grid grid-cols-[87px_87px_87px] gap-x-1 gap-y-[5px] pl-[9px]">
          <PushButton className="h-[21px]">NOD paths</PushButton>
          <PushButton className="col-end-3 h-[21px]">DAT paths</PushButton>
          <PushButton className="col-start-1 h-[21px]">Distantlights</PushButton>
          <PushButton className="h-[21px]">Water</PushButton>
          <PushButton className="h-[21px]">Shorelines</PushButton>
        </div>
      </Group>
    </div>
  </section>
);

/* ---------- schematic view ---------- */

const SvSep = () => (
  <span className="flex w-[10px] shrink-0 justify-center"><span className="h-5 w-px bg-[#121212]" /></span>
);

const SvSlot = ({ on, children }) => (
  <span className="flex w-[23px] shrink-0 justify-center">
    <button type="button" className={`flex size-[21px] items-center justify-center ${on ? "border border-[#12294b] bg-[#3f81da]" : ""}`}>
      {children}
    </button>
  </span>
);

const SchematicToolbar = () => (
  <div className="flex h-7 items-center border-b-2 border-black bg-[#434343] pt-[2px]">
    <span className="-ml-[6px] flex">
      <SvSlot on>
        <Ico w={16} h={16} label="Display floater">
          <path d="M2 2h12v12H2z" fill="#cfd4d8" stroke="#fff" strokeWidth="2" />
          <path d="M5 5h6v6H5z" fill="#5a6068" />
        </Ico>
      </SvSlot>
    </span>
    <SvSep />
    <SvSlot on><Ico w={14} h={16} label="Select"><Pointer x={3} y={1} /></Ico></SvSlot>
    <SvSep />
    <SvSlot><Link w={15} bright /></SvSlot>
    <SvSep />
    <SvSlot><Unlink w={15} /></SvSlot>
    <SvSlot>
      <Ico w={14} h={14} label="Delete"><path d="M1 1l12 12M13 1L1 13" stroke="#e0585c" strokeWidth="2" /></Ico>
    </SvSlot>
    <SvSep />
    <SvSlot>
      <Ico w={16} h={16} label="Hierarchy mode">
        <path d="M1 1h6v3H1zM7 7h8v2H7zM7 12h8v2H7z" fill="#dfe3e6" />
        <path d="M3 4v9h4M3 8h4" stroke="#dfe3e6" />
      </Ico>
    </SvSlot>
    <SvSlot on>
      <Ico w={16} h={16} label="Reference mode">
        <path d="M5 1h6v5H5zM1 12h3v3H1zM6.500 12h3v3h-3zM12 12h3v3h-3z" fill="#fff" />
        <path d="M8 6v6M8 7l-5 5M8 7l5 5" stroke="#fff" />
      </Ico>
    </SvSlot>
    <SvSep />
    <SvSlot><Bars label="Always arrange" /></SvSlot>
    <SvSep />
    <SvSlot>
      <Ico w={18} h={16} label="Arrange children">
        <path d="M4 2h10M1 8h16M3 13h12" stroke="#e8ebee" strokeWidth="2.500" />
        <path d="M9 2v10" stroke="#e8ebee" />
      </Ico>
    </SvSlot>
    <SvSlot>
      <Ico w={18} h={16} label="Arrange selected">
        <path d="M1 1h16" stroke="#e8ebee" />
        <path d="M3 4.500h12M3 13.500h12" stroke="#7fbf4d" strokeWidth="3" />
        <path d="M6 6l6 6" stroke="#e8ebee" />
      </Ico>
    </SvSlot>
    <SvSlot><Bars plus label="Free all" /></SvSlot>
    <SvSlot><Bars plus color="#7fbf4d" label="Free selected" /></SvSlot>
    <SvSep />
    <SvSlot on>
      <Ico w={17} h={16} label="Move children">
        <path d="M2 2h8v4H2zM4 11h7v3H4z" fill="#e8ebee" />
        <path d="M5 6v6M11 12h5M14 9l3 3-3 3" stroke="#fff" />
      </Ico>
    </SvSlot>
    <SvSep />
    <SvSlot>
      <Ico w={14} h={14} label="Expand selected">
        <path d="M0 3h14" stroke="#7fbf4d" strokeWidth="3" />
        <path d="M2 7h10l-5 5z" fill="#fff" />
      </Ico>
    </SvSlot>
    <SvSlot>
      <Ico w={14} h={14} label="Collapse selected">
        <path d="M0 11h14" stroke="#7fbf4d" strokeWidth="3" />
        <path d="M2 7h10L7 2z" fill="#fff" />
      </Ico>
    </SvSlot>
    <SvSep />
    <SvSlot>
      <Ico w={16} h={16} label="Preferences">
        <path d="M1 2h11v12H1z" fill="#e8ebee" />
        <path d="M4 8l3 4 8-9" stroke="#3f9a2c" strokeWidth="2.500" />
      </Ico>
    </SvSlot>
    <SvSep />
    <input
      aria-label="View name"
      defaultValue="Schematic View 1"
      className="h-4 w-[113px] shrink-0 border-t-2 border-l-2 border-[#151515] bg-[#4e4e4e] px-px leading-3 outline-none"
    />
    <SvSep />
    <DropDown label="Bookmark" text="" className="w-[110px] shrink-0" textClass="bg-[#555]" />
    <SvSlot>
      <Ico w={16} h={16} label="Go to bookmark">
        <circle cx="8" cy="8" r="7" stroke="#ddd" strokeWidth="1.200" />
        <path d="M4 7h4V5l4 3-4 3V9H4z" fill="#fff" />
      </Ico>
    </SvSlot>
    <SvSlot>
      <Ico w={16} h={16} label="Delete bookmark">
        <circle cx="8" cy="8" r="7" stroke="#ddd" strokeWidth="1.200" />
        <path d="M5 5l6 6M11 5l-6 6" stroke="#e0484e" strokeWidth="2.200" />
      </Ico>
    </SvSlot>
  </div>
);

const Node = ({ pos, tone = "bg-[#48ff3f]", children, arrow }) => (
  <div className={`absolute h-5 w-[100px] border border-black pl-1 leading-5 text-[#0b1a0b] ${tone} ${pos}`}>
    {arrow && (
      <span className="absolute -top-[9px] left-px border-x-5 border-b-8 border-x-transparent border-b-[#6a6a6a]" />
    )}
    {children}
  </div>
);

const Wire = ({ pos }) => (
  <span className={`absolute flex h-5 w-[7px] flex-col items-center ${pos}`}>
    <span className="w-px flex-1 bg-[#0d7a12]" />
    <span className="border-x-3 border-b-5 border-x-transparent border-b-[#0d7a12]" />
  </span>
);

const SchematicView = () => (
  <section className="absolute top-[103px] left-0 w-[746px] border-t border-r-[6px] border-b-[6px] border-t-[#6f6f6f] border-r-[#8f8f8f] border-b-[#8f8f8f] bg-[#8f8f8f] font-['Open_Sans',sans-serif] shadow-[1px_0_0_#5a5a5a]">
    <header className="flex h-[30px]">
      <span className="-ml-1 flex size-4 shrink-0 translate-y-[7px] items-center justify-center rounded-sm bg-[#2d3238]">
        <MaxLogo size={12} />
      </span>
      <h2 className="flex-1 pl-[80px] text-center text-[14px] leading-[30px] text-[#222]">Schematic View 1</h2>
      <Caption dark />
    </header>
    <nav className="flex h-5 gap-[15px] bg-[#f4f6f9] pl-px text-[11px] text-black">
      {["Edit", "Select", "List Views", "Layout", "Options", "Display", "View"].map((m) => (
        <button key={m} type="button" className="leading-5">{m}</button>
      ))}
    </nav>
    <div className="font-['DejaVu_Sans_Condensed','DejaVu_Sans',sans-serif]">
      <SchematicToolbar />
      <div className="flex">
        <div className="relative h-[274px] flex-1 overflow-hidden bg-[#404040] bg-[linear-gradient(#343434_1px,transparent_1px),linear-gradient(90deg,#343434_1px,transparent_1px)] bg-[size:10px_10px] bg-[position:8px_7px]">
          <span className="absolute top-[67px] h-px w-full bg-[#2a2a2a]" />
          <span className="absolute left-[78px] h-full w-px bg-[#2a2a2a]" />
          <Node pos="top-[67px] left-[78px]" tone="border-dotted bg-[#6b68b4] bg-[repeating-conic-gradient(#5553a0_0_25%,#807ccb_0_50%)] bg-[size:2px_2px]">maphelper</Node>
          <Node pos="top-[67px] left-[198px]">dev_map</Node>
          <Node pos="top-[107px] left-[198px]" arrow>mxomara</Node>
          <Node pos="top-[147px] left-[198px]" arrow>base</Node>
          <Node pos="top-[187px] left-[198px]" arrow>objs</Node>
          <Node pos="top-[67px] left-[318px]">dev_model</Node>
          <Node pos="top-[107px] left-[318px]" arrow>mxobdgchurch</Node>
          <Node pos="top-[147px] left-[318px]" tone="bg-white outline-2 outline-white" arrow>mxobdgchurch</Node>
          <Wire pos="top-[87px] left-[245px]" />
          <Wire pos="top-[127px] left-[245px]" />
          <Wire pos="top-[167px] left-[245px]" />
          <Wire pos="top-[87px] left-[365px]" />
          <Wire pos="top-[125px] left-[365px]" />
        </div>
        <div className="flex w-4 flex-col items-center bg-[#f0f0f0] text-[#555]">
          <ChevronUp size={12} strokeWidth={4} className="my-[3px]" />
          <div className="mt-[59px] h-[119px] w-full bg-[#cdcdcd]" />
          <ChevronDown size={12} strokeWidth={4} className="mt-auto mb-[3px]" />
        </div>
      </div>
      <div className="flex h-[17px] items-center bg-[#f0f0f0] text-[#555]">
        <ChevronLeft size={12} strokeWidth={4} className="-ml-1 shrink-0" />
        <div className="ml-[227px] h-full w-[354px] bg-[#cdcdcd]" />
        <ChevronRight size={12} strokeWidth={4} className="mr-[18px] ml-auto" />
      </div>
      <div className="flex h-[25px] items-center bg-[#434343] text-[#d0d0d0]">
        <Ico w={13} h={16} label="Zoom selected">
          <path d="M0 1h7v8H0z" fill="#8fc96a" stroke="#fff" />
          <circle cx="8" cy="10" r="3" fill="#fff" />
          <path d="M10 12l2 3" stroke="#ddd" strokeWidth="1.500" />
        </Ico>
        <input aria-label="Prompt" className="ml-[9px] h-4 w-[149px] border-t-2 border-l-2 border-[#151515] bg-[#4e4e4e] outline-none" />
        <p className="ml-[7px] h-4 w-[410px] border-t border-l border-[#151515] pl-1 leading-4">Click or click-and-drag to select objects</p>
        <div className="ml-[11px] flex items-center gap-[6px] text-[#f2f2f2]">
          <Ico w={16} h={17} label="Pan"><Hand /></Ico>
          <Ico w={16} h={16} label="Zoom">
            <circle cx="5" cy="7" r="4.500" fill="#e7edf2" />
            <path d="M8 10l4 5" stroke="#bbb" strokeWidth="2" />
            <path d="M10 3h5M12.500 1v5M10 7.500h5" stroke="#fff" />
          </Ico>
          <Ico w={16} h={16} label="Region zoom">
            <rect x="1" y="1" width="10" height="10" stroke="#ddd" strokeDasharray="2 2" />
            <circle cx="12" cy="11" r="2.500" fill="#fff" />
          </Ico>
          <Ico w={17} h={17} label="Zoom extents">
            <path d="M1 5V1h3M13 1h3v4M16 12v4h-3M4 16H1v-4" stroke="#ddd" />
            <Cube x={5} y={4} s={0.5} />
          </Ico>
          <Ico w={17} h={17} label="Zoom extents selected">
            <path d="M1 5V1h3M13 1h3v4M16 12v4h-3M4 16H1v-4" stroke="#ddd" />
            <Cube x={5} y={4} s={0.5} front="#6fa552" top="#a6d88a" side="#48752f" />
          </Ico>
          <Ico w={17} h={17} label="Pan to selected">
            <path d="M1 5V1h3M13 1h3v4M16 12v4h-3M4 16H1v-4" stroke="#ddd" />
            <Hand />
          </Ico>
        </div>
      </div>
    </div>
  </section>
);

/* ---------- display floater ---------- */

const Swatch = ({ tone, label }) => (
  <div className="flex h-5 items-center gap-1 pl-[6px]">
    <button type="button" aria-label={label} className="flex size-[15px] items-center justify-center border border-[#333] border-r-black border-b-black">
      <span className={`size-[5px] ${tone}`} />
    </button>
    <span className="whitespace-nowrap">{label}</span>
  </div>
);

const DisplayFloater = () => (
  <section className="absolute top-[615px] left-[510px] w-[129px] border-8 border-t-0 border-[#ebebeb] bg-[#444]">
    <header className="relative flex h-[31px] justify-between bg-[#ebebeb] font-['Open_Sans',sans-serif]">
      <h2 className="ml-8 text-[14px] leading-8 text-[#1f2430]">Display</h2>
      <button type="button" aria-label="Close" className="mt-[6px] flex h-[19px] w-5 items-center justify-center bg-[#b3b3b3] text-white">
        <XIcon size={9} strokeWidth={4} />
      </button>
    </header>
    <div className="px-[5px] pt-px pb-[5px]">
      <Group title="Relationships" className="pt-[2px] pb-[3px]" legendClass="ml-1">
        <Swatch tone="bg-[#f08080]" label="Constraints" />
        <Swatch tone="bg-[#f08080]" label="Controllers" />
        <Swatch tone="bg-[#f01cf0]" label="Param Wires" />
        <Swatch tone="bg-[#48f048]" label="Light Inclusion" />
        <Swatch tone="bg-[#e8c040]" label="Modifiers" />
      </Group>
      <Group title="Entities" className="mt-[3px] pt-px pb-1" legendClass="ml-1">
        <Swatch tone="bg-[#ece27c]" label="Base Objects" />
        <Swatch tone="bg-[#e8c840]" label="Modifier Stack" />
        <Swatch tone="bg-[#aaa078]" label="Materials" />
        <Swatch tone="bg-[#f08080]" label="Controllers" />
        <div className="mt-px flex justify-end gap-2 pr-[5px]">
          <PushButton className="h-4 w-[18px]">P</PushButton>
          <PushButton className="h-4 w-[18px]">R</PushButton>
          <PushButton className="h-4 w-[18px]">S</PushButton>
        </div>
      </Group>
      <div className="mt-[5px] flex gap-1">
        <PushButton className="h-5 flex-1" tone="bg-[#3f81da]">Expand</PushButton>
        <PushButton className="h-5 flex-1">Focus</PushButton>
      </div>
    </div>
  </section>
);

export default function App() {
  return (
    <main className="relative h-screen overflow-hidden bg-[#434343] font-['DejaVu_Sans_Condensed','DejaVu_Sans',sans-serif] text-[11px] text-[#d0d0d0]">
      <BrowserBehind />
      <MainWindow />
      <HierarchyManager />
      <MapDialog />
      <div className="absolute top-[503px] left-[337px] h-full w-2 bg-[#ebebeb]" />
      <DisplayFloater />
      <SchematicView />
    </main>
  );
}
